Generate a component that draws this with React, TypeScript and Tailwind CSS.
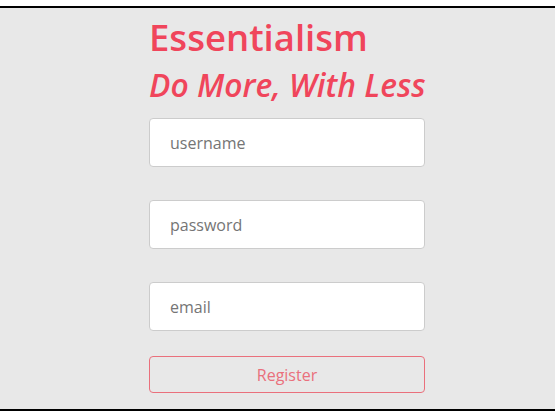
export default function App() {
  return (
    <div className="min-h-[418px] bg-white pt-[6px] font-['Open_Sans',sans-serif]">
      <div className="h-[405px] border-y-2 border-black bg-[#e8e8e8]">
        <div className="ml-[149px] w-[276px]">
          <h1 className="mt-[3px] text-[36.5px] leading-[52px] font-semibold text-[#f0455b]">Essentialism</h1>
          <h2 className="whitespace-nowrap text-[31.8px] leading-[44px] font-semibold italic text-[#f0455b]">
            Do More, With Less
          </h2>
          <form className="mt-[11px] flex flex-col gap-[33px]">
            <input
              placeholder="username"
              className="h-[49px] rounded-[4px] border border-[#cccccc] bg-white pl-[20px] text-[16px] text-[#333] placeholder:text-[#757575] outline-none"
            />
            <input
              type="password"
              placeholder="password"
              className="h-[49px] rounded-[4px] border border-[#cccccc] bg-white pl-[20px] text-[16px] text-[#333] placeholder:text-[#757575] outline-none"
            />
            <input
              placeholder="email"
              className="h-[49px] rounded-[4px] border border-[#cccccc] bg-white pl-[20px] text-[16px] text-[#333] placeholder:text-[#757575] outline-none"
            />
          </form>
          <button className="mt-[25px] h-[37px] w-full rounded-[4px] border border-[#ea707c] text-[16px] text-[#ea707c]">
            Register
          </button>
        </div>
      </div>
    </div>
  );
}
